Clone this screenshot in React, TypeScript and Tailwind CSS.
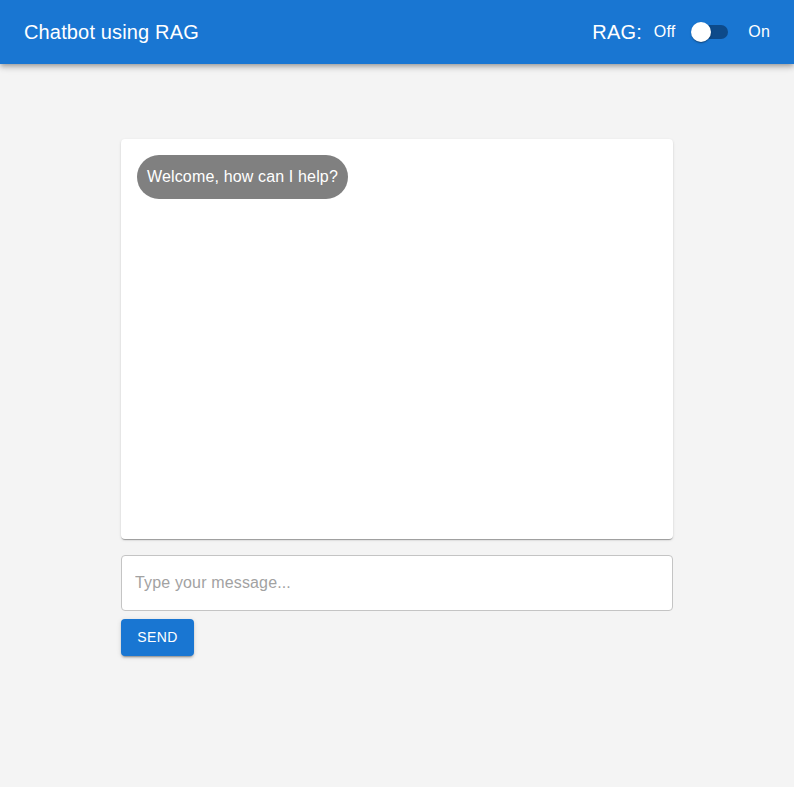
export default function App() {
  return (
    <div className="min-h-[787px] bg-[#f4f4f4] font-['Liberation_Sans',Arial,sans-serif]">
      <header className="flex h-16 items-center justify-between bg-[#1976d2] pl-6 pr-6 text-white shadow-[0_2px_4px_-1px_rgba(0,0,0,0.2),0_4px_5px_0_rgba(0,0,0,0.14),0_1px_10px_0_rgba(0,0,0,0.12)]">
        <h1 className="text-[20px] leading-none tracking-[0.15px]">Chatbot using RAG</h1>
        <div className="flex items-center">
          <span className="mr-3 text-[20px] leading-none tracking-[0.15px]">RAG:</span>
          <span className="text-[16px] leading-none tracking-[0.15px]">Off</span>
          <div className="relative ml-3 mr-[20px] h-[34px] w-[41px]">
            <div className="absolute left-[7px] top-[10px] h-[14px] w-[34px] rounded-full bg-[#0d4a8a]" />
            <div className="absolute left-[4px] top-[7px] h-[20px] w-[20px] rounded-full bg-white shadow-[0_2px_1px_-1px_rgba(0,0,0,0.2),0_1px_1px_0_rgba(0,0,0,0.14),0_1px_3px_0_rgba(0,0,0,0.12)]" />
          </div>
          <span className="text-[16px] leading-none tracking-[0.15px]">On</span>
        </div>
      </header>

      <main className="mx-auto w-[552px] pt-[75px]">
        <div className="h-[400px] rounded bg-white p-4 shadow-[0_2px_1px_-1px_rgba(0,0,0,0.2),0_1px_1px_0_rgba(0,0,0,0.14),0_1px_3px_0_rgba(0,0,0,0.12)]">
          <div className="inline-block rounded-[22px] bg-[#808080] px-[10px] py-[12px] text-[16px] leading-[20px] tracking-[0.15px] text-white">
            Welcome, how can I help?
          </div>
        </div>

        <div className="mt-4 flex h-14 items-center rounded border border-[#c4c4c4] bg-white px-[13px]">
          <input
            className="w-full bg-transparent text-[16px] tracking-[0.15px] text-black outline-none placeholder:text-[#a2a2a2]"
            placeholder="Type your message..."
          />
        </div>

        <button className="mt-2 h-[37px] w-[73px] rounded bg-[#1976d2] text-[14px] tracking-[0.4px] text-white shadow-[0_3px_1px_-2px_rgba(0,0,0,0.2),0_2px_2px_0_rgba(0,0,0,0.14),0_1px_5px_0_rgba(0,0,0,0.12)]">
          SEND
        </button>
      </main>
    </div>
  );
}
